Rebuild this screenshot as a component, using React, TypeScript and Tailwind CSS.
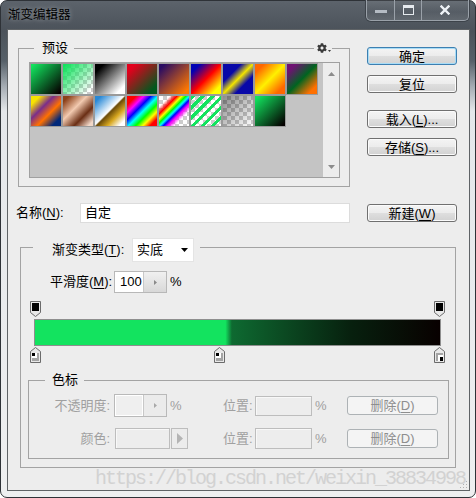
import React from "react";
import { FaCog } from "react-icons/fa";

const presets = [
  "bg-[linear-gradient(135deg,#12e35e_5%,#050000_95%)]",
  "bg-[image:linear-gradient(135deg,#12e35e_5%,rgba(18,227,94,0)_90%),conic-gradient(#cccccc_25%,#ffffff_0_50%,#cccccc_0_75%,#ffffff_0)] bg-[length:100%_100%,8px_8px]",
  "bg-[linear-gradient(135deg,#000000_15%,#ffffff_85%)]",
  "bg-[linear-gradient(135deg,#e2001c_15%,#00581e_85%)]",
  "bg-[linear-gradient(135deg,#2a0c62_10%,#ff7800_90%)]",
  "bg-[linear-gradient(135deg,#0000b4_15%,#ff0000_50%,#ffff00_85%)]",
  "bg-[linear-gradient(135deg,#0808a8_30%,#f2e400_50%,#0808a8_70%)]",
  "bg-[linear-gradient(135deg,#ff6800_15%,#fff000_50%,#ff6800_85%)]",
  "bg-[linear-gradient(135deg,#6e1272_15%,#006420_50%,#ff7000_85%)]",
  "bg-[linear-gradient(135deg,#f8e200_15%,#7a2e8a_38%,#ff7000_60%,#00287a_85%)]",
  "bg-[linear-gradient(135deg,#8c4018_10%,#f2cab0_40%,#6a2e14_68%,#f2d8c8_92%)]",
  "bg-[linear-gradient(135deg,#2888d6_10%,#ffffff_48%,#6a4a08_52%,#d8a820_70%,#ffffff_90%)]",
  "bg-[linear-gradient(135deg,#ff0000_15%,#ff00ff_28%,#0000ff_40%,#00ffff_52%,#00ff00_64%,#ffff00_76%,#ff0000_88%)]",
  "bg-[image:linear-gradient(135deg,rgba(255,0,0,0)_18%,#ff0000_30%,#ffff00_38%,#00ff00_45%,#00ffff_51%,#0000ff_57%,#ff00ff_64%,rgba(255,0,255,0)_76%),conic-gradient(#cccccc_25%,#ffffff_0_50%,#cccccc_0_75%,#ffffff_0)] bg-[length:100%_100%,8px_8px]",
  "bg-[image:repeating-linear-gradient(135deg,#12e35e_0_3px,rgba(0,0,0,0)_3px_7px),conic-gradient(#cccccc_25%,#ffffff_0_50%,#cccccc_0_75%,#ffffff_0)] bg-[length:100%_100%,8px_8px]",
  "bg-[image:linear-gradient(135deg,rgba(0,0,0,0.45),rgba(0,0,0,0)),conic-gradient(#cccccc_25%,#ffffff_0_50%,#cccccc_0_75%,#ffffff_0)] bg-[length:100%_100%,8px_8px]",
  "bg-[linear-gradient(135deg,#12e35e_5%,#050000_95%)]",
];

function Btn({ children, primary, className = "" }: { children: React.ReactNode; primary?: boolean; className?: string }) {
  return (
    <div
      className={`flex h-[18px] w-[90px] items-center justify-center rounded-[3px] border text-[13px] leading-none bg-[linear-gradient(#f4f4f4_0%,#ececec_48%,#dedede_52%,#d2d2d2_100%)] ${
        primary ? "border-[#3c7fb1] shadow-[inset_0_0_0_1px_#a8dcf6]" : "border-[#707070] shadow-[inset_0_0_0_1px_#fbfbfb]"
      } ${className}`}
    >
      {children}
    </div>
  );
}

function DisabledBtn() {
  return (
    <div className="flex h-[19px] w-[91px] items-center justify-center rounded-[3px] border border-[#adb2b5] bg-[#f4f4f4] text-[13px] leading-none text-[#8e8e8e]">
      删除(<span className="underline underline-offset-2">D</span>)
    </div>
  );
}

function OpacityStop() {
  return (
    <svg width="11" height="16" viewBox="0 0 11 16">
      <path d="M0.5 0.5H10.5V11.5L5.5 15.5L0.5 11.5Z" fill="#e8e8e8" stroke="#6b6b6b" />
      <rect x="2" y="2" width="7" height="8" fill="#000" />
    </svg>
  );
}

function ColorStop({ back }: { back?: boolean }) {
  return (
    <svg width="11" height="16" viewBox="0 0 11 16">
      <path d="M5.5 0.5L10.5 4.5V15.5H0.5V4.5Z" fill="#e8e8e8" stroke="#6b6b6b" />
      {back ? (
        <>
          <rect x="2" y="6" width="7" height="8" fill="#a4a4a4" />
          <rect x="4" y="8" width="5" height="6" fill="#fff" />
          <rect x="6" y="10" width="3" height="4" fill="#000" />
        </>
      ) : (
        <>
          <rect x="2" y="6" width="7" height="8" fill="#a4a4a4" />
          <rect x="2" y="6" width="5" height="5" fill="#fff" />
          <rect x="2" y="6" width="3" height="3" fill="#000" />
        </>
      )}
    </svg>
  );
}

function TitleBar() {
  return (
    <div className="flex h-[28px] items-start">
      <div className="pl-[1px] pt-[7px] text-[12.5px] leading-[14px] text-black [text-shadow:0_0_5px_rgba(255,255,255,0.45)]">
        渐变编辑器
      </div>
      <div className="ml-auto mr-[1px] -mt-px flex h-[21px] overflow-hidden rounded-b-[5px] border border-t-0 border-[#9aa1a9] bg-[linear-gradient(#ffffff14,#ffffff00_60%,#ffffff18)] shadow-[0_0_0_1px_#3d434a]">
        <div className="flex w-[28px] justify-center border-r border-[#9aa1a9] pt-[10px]">
          <div className="h-[3px] w-[12px] bg-[#b4bbc3]" />
        </div>
        <div className="flex w-[27px] justify-center border-r border-[#9aa1a9] pt-[5px]">
          <div className="h-[10px] w-[11px] border-[1.5px] border-t-[3px] border-[#e6eaee]" />
        </div>
        <div className="flex w-[46px] justify-center pt-[5px]">
          <svg width="10" height="10" viewBox="0 0 10 10">
            <path d="M1.5 1.5L8.5 8.5M8.5 1.5L1.5 8.5" stroke="#eef2f6" strokeWidth="2.4" strokeLinecap="square" />
          </svg>
        </div>
      </div>
    </div>
  );
}

export default function App() {
  return (
    <div className="flex h-[498px] w-[476px] flex-col rounded-[7px] border border-[#2e3237] bg-[linear-gradient(180deg,#5c636b_0px,#4b525a_30px,#566069_60px,#a4abb2_85px,#e4e7ea_110px,#eeeff0_100%)] pb-[6px] pl-[6px] pr-[5px] font-['Liberation_Sans','Noto_Sans_CJK_SC',sans-serif] text-[13px] text-black">
      <TitleBar />
      <div className="relative flex flex-1 flex-col border border-[#5f6366] bg-[#ededed] pt-[10px]">
        {/* presets + right buttons */}
        <div className="ml-[10px] flex items-start">
          <div className="relative">
            <fieldset className="w-[332px] border border-[#a3a3a3] pb-[8px] pl-[10px] pr-[9px] pt-[6px]">
              <legend className="ml-[5px] pl-[8px] pr-[6px] text-[13px] leading-[16px]">预设</legend>
              <div className="flex h-[116px] border border-[#a0a0a0] bg-[#c4c4c4]">
                <div className="flex w-[293px] flex-wrap content-start">
                  {presets.map((c, i) => (
                    <div key={i} className={`h-[32px] w-[32px] border border-[#9a9a9a] ${c}`} />
                  ))}
                </div>
                <div className="flex w-[16px] flex-col items-center justify-between bg-[#ededed] pb-[8px] pt-[9px]">
                  <svg width="7" height="4" viewBox="0 0 7 4">
                    <path d="M0 4L3.5 0L7 4Z" fill="#8c8c8c" />
                  </svg>
                  <svg width="7" height="4" viewBox="0 0 7 4">
                    <path d="M0 0L3.5 4L7 0Z" fill="#8c8c8c" />
                  </svg>
                </div>
              </div>
            </fieldset>
            <div className="absolute left-[296px] top-[1px] flex h-[14px] w-[18px] items-center gap-[1px] bg-[#ededed] pl-[3px]">
              <FaCog size={10} color="#3a3a3a" />
              <svg width="3" height="2" viewBox="0 0 3 2" className="mt-[6px]">
                <path d="M0 0H3L1.5 2Z" fill="#3a3a3a" />
              </svg>
            </div>
          </div>
          <div className="ml-[17px] flex flex-col pt-[7px]">
            <Btn primary>确定</Btn>
            <Btn className="mt-[10px]">复位</Btn>
            <Btn className="mt-[17px]">
              载入(<span className="underline underline-offset-2">L</span>)...
            </Btn>
            <Btn className="mt-[10px]">
              存储(<span className="underline underline-offset-2">S</span>)...
            </Btn>
          </div>
        </div>

        {/* name row */}
        <div className="ml-[8px] mt-[16px] flex h-[20px] items-start">
          <div className="flex h-[20px] w-[64px] items-center">
            名称(<span className="underline underline-offset-2">N</span>):
          </div>
          <div className="flex h-[20px] w-[270px] items-center border border-[#dcdcdc] bg-white pl-[4px]">自定</div>
          <Btn className="ml-[17px] mt-[1px]">
            新建(<span className="underline underline-offset-2">W</span>)
          </Btn>
        </div>

        {/* gradient group */}
        <fieldset className="ml-[12px] mt-[9px] w-[436px] border border-[#a3a3a3] pb-[8px] pl-[7px] pr-[6px]">
          <legend className="ml-[5px] pl-[19px] pr-[6px] pt-[6px]">
            <span className="flex items-center">
              <span className="w-[80px]">
                渐变类型(<span className="underline underline-offset-2">T</span>):
              </span>
              <span className="flex h-[24px] w-[62px] items-center justify-between border border-[#e4e4e4] bg-white pl-[4px] pr-[5px]">
                实底
                <svg width="7" height="4" viewBox="0 0 7 4">
                  <path d="M0 0H7L3.5 4Z" fill="#000" />
                </svg>
              </span>
            </span>
          </legend>

          <div className="ml-[22px] mt-[9px] flex h-[22px] items-center">
            <span className="w-[64px]">
              平滑度(<span className="underline underline-offset-2">M</span>):
            </span>
            <div className="flex h-[22px] w-[53px] border border-[#b8b8b8]">
              <div className="flex w-[28px] items-center bg-white pl-[5px]">100</div>
              <div className="flex flex-1 items-center justify-center border-l border-[#c8c8c8] bg-[linear-gradient(#f0f0f0,#d8d8d8)]">
                <svg width="3" height="5" viewBox="0 0 3 5">
                  <path d="M0 0L3 2.5L0 5Z" fill="#8a8a8a" />
                </svg>
              </div>
            </div>
            <span className="ml-[3px]">%</span>
          </div>

          {/* gradient bar with stops */}
          <div className="ml-[2px] mt-[8px] w-[417px]">
            <div className="relative h-[16px]">
              <div className="absolute left-0 top-0">
                <OpacityStop />
              </div>
              <div className="absolute left-[404px] top-0">
                <OpacityStop />
              </div>
            </div>
            <div className="ml-[4px] mt-[2px] h-[27px] w-[407px] border border-[#8e8e8e] bg-[linear-gradient(90deg,#13e35f_0%,#13e35f_47%,#0e6a31_48.6%,#07200e_78%,#080000_100%)]" />
            <div className="relative mt-[1px] h-[16px]">
              <div className="absolute left-0 top-0">
                <ColorStop />
              </div>
              <div className="absolute left-[184px] top-0">
                <ColorStop />
              </div>
              <div className="absolute left-[404px] top-0">
                <ColorStop back />
              </div>
            </div>
          </div>

          {/* color stops group */}
          <fieldset className="mt-[9px] w-[421px] border border-[#a3a3a3] pb-[9px]">
            <legend className="ml-[16px] pl-[7px] pr-[6px] leading-[16px]">色标</legend>
            <div className="mt-[6px] flex h-[23px] items-center text-[#a0a0a0]">
              <span className="w-[81px] text-right">不透明度:</span>
              <div className="ml-[4px] flex w-[109px] items-center">
                <div className="flex h-[23px] w-[53px] border border-[#b9b9b9]">
                  <div className="w-[28px] bg-[#efefef] shadow-[inset_1px_1px_0_#ffffff,inset_-1px_-1px_0_#ffffff]" />
                  <div className="flex flex-1 items-center justify-center border-l border-[#c8c8c8] bg-[#ebebeb]">
                    <svg width="3" height="5" viewBox="0 0 3 5">
                      <path d="M0 0L3 2.5L0 5Z" fill="#a8a8a8" />
                    </svg>
                  </div>
                </div>
                <span className="ml-[3px]">%</span>
              </div>
              <span className="w-[32px]">位置:</span>
              <div className="h-[20px] w-[57px] border border-[#bdbdbd] bg-[#ededed] shadow-[inset_1px_1px_0_#f8f8f8]" />
              <span className="w-[35px] pl-[3px]">%</span>
              <DisabledBtn />
            </div>
            <div className="mt-[11px] flex h-[21px] items-center text-[#a0a0a0]">
              <span className="w-[81px] text-right">颜色:</span>
              <div className="ml-[4px] flex w-[109px] items-center">
                <div className="ml-[1px] h-[21px] w-[55px] border border-[#bdbdbd] bg-[#ededed] shadow-[inset_1px_1px_0_#f8f8f8]" />
                <div className="ml-[1px] flex h-[21px] w-[17px] items-center justify-center border border-[#bdbdbd] bg-[#ececec]">
                  <svg width="6" height="11" viewBox="0 0 6 11">
                    <path d="M0 0L6 5.5L0 11Z" fill="#b4b4b4" />
                  </svg>
                </div>
              </div>
              <span className="w-[32px]">位置:</span>
              <div className="h-[21px] w-[57px] border border-[#bdbdbd] bg-[#ededed] shadow-[inset_1px_1px_0_#f8f8f8]" />
              <span className="w-[35px] pl-[3px]">%</span>
              <DisabledBtn />
            </div>
          </fieldset>
        </fieldset>

        <div className="pointer-events-none absolute left-[87px] top-[439px] font-['Liberation_Mono',monospace] text-[20px] leading-[20px] tracking-[-2px] text-[#d2d2d2]">
          https://blog.csdn.net/weixin_38834998
        </div>
        <svg className="absolute bottom-[1px] right-[1px]" width="8" height="8" viewBox="0 0 8 8">
          <rect x="6" y="0" width="1" height="1" fill="#b0b0b0" />
          <rect x="3" y="3" width="1" height="1" fill="#b0b0b0" />
          <rect x="6" y="3" width="1" height="1" fill="#b0b0b0" />
          <rect x="0" y="6" width="1" height="1" fill="#b0b0b0" />
          <rect x="3" y="6" width="1" height="1" fill="#b0b0b0" />
          <rect x="6" y="6" width="1" height="1" fill="#b0b0b0" />
        </svg>
      </div>
    </div>
  );
}
